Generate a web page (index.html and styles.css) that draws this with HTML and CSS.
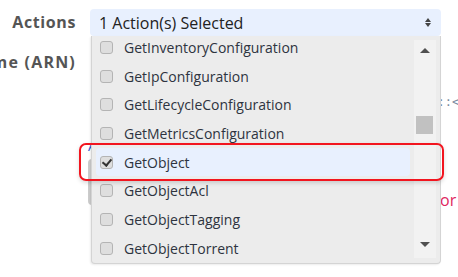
FILE: index.html
```html
<!DOCTYPE html>
<html>
<head>
    <title>Policy Generator</title>
    <meta http-equiv="content-type" content="text/html; charset=UTF-8"/>
    <link rel="stylesheet" href="styles.css">
</head>
<body>
    <div class="pg_form">
        <div class="pg_row">
            <div class="pg_label">Actions</div>
            <div class="pg_field">
                <div class="pg_select">
                    <span>1 Action(s) Selected</span>
                    <i class="pg_caret"></i>
                </div>
            </div>
        </div>
        <div class="pg_row pg_row_arn">
            <div class="pg_label pg_label_wide">Amazon Resource Name (ARN)</div>
            <div class="pg_field pg_arn">
                <p class="pg_hint">arn:aws:s3:::&lt;</p>
                <p class="pg_add">Add Statement</p>
                <div class="pg_box"></div>
                <p class="pg_or">or</p>
            </div>
        </div>

        <!-- dropdown lies over the rows below -->
        <div class="pg_drop">
            <ul class="pg_list">
                <li><i class="chk"></i>GetInventoryConfiguration</li>
                <li><i class="chk"></i>GetIpConfiguration</li>
                <li><i class="chk"></i>GetLifecycleConfiguration</li>
                <li><i class="chk"></i>GetMetricsConfiguration</li>
                <li class="on"><i class="chk"></i>GetObject</li>
                <li><i class="chk"></i>GetObjectAcl</li>
                <li><i class="chk"></i>GetObjectTagging</li>
                <li><i class="chk"></i>GetObjectTorrent</li>
            </ul>
            <div class="pg_scroll">
                <i class="up"></i>
                <div class="thumb"></div>
                <i class="down"></i>
            </div>
        </div>
        <div class="pg_mark"></div>
    </div>
</body>
</html>
```

FILE: styles.css
```css
body{
    margin: 0;
    background: #fff;
    font-family: "Open Sans", "Noto Sans", sans-serif;
    color: #333;
}
.pg_form{
    position: relative;
    width: 458px;
    height: 277px;
    overflow: hidden;
    padding-top: 9px;
    box-sizing: border-box;
}
.pg_row{
    display: flex;
    align-items: flex-start;
}
.pg_label{
    width: 76px;
    flex: none;
    display: flex;
    justify-content: flex-end;
    white-space: nowrap;
    font-size: 16px;
    font-weight: bold;
    color: #555;
    line-height: 27px;
    letter-spacing: 0.6px;
}
.pg_label_wide{
    letter-spacing: 1.2px;
}
.pg_field{
    margin-left: 14px;
    width: 351px;
    flex: none;
}
.pg_select{
    height: 27px;
    background: #e8f0fe;
    border-radius: 4px;
    display: flex;
    align-items: center;
    justify-content: space-between;
    padding: 0 9px;
    box-sizing: border-box;
    font-size: 16px;
    color: #222;
}
.pg_caret{
    width: 7px;
    height: 9px;
    position: relative;
}
.pg_caret:before,
.pg_caret:after{
    content: "";
    position: absolute;
    left: 0;
    border-left: 3.5px solid transparent;
    border-right: 3.5px solid transparent;
}
.pg_caret:before{
    top: 0;
    border-bottom: 4px solid #444;
}
.pg_caret:after{
    bottom: 0;
    border-top: 4px solid #444;
}
.pg_row_arn{
    margin-top: 13px;
}
.pg_arn{
    position: relative;
    height: 200px;
}
.pg_hint{
    margin: 46px 0 0 268px;
    font-family: "DejaVu Sans Mono", monospace;
    font-size: 12px;
    color: #7a8aa0;
    white-space: nowrap;
}
.pg_add{
    margin: 27px 0 0 -2px;
    font-size: 14px;
    color: #3355cc;
}
.pg_box{
    margin: 4px 0 0 -2px;
    width: 120px;
    height: 44px;
    border: 1px solid #ccc;
    border-left: 4px solid #ccc;
    border-radius: 4px;
}
.pg_or{
    margin: -16px 0 0 350px;
    font-size: 16px;
    color: #e0245e;
}
.pg_drop{
    position: absolute;
    left: 91px;
    top: 36px;
    width: 350px;
    height: 228px;
    background: #ececec;
    border: 1px solid #d4d4d4;
    border-top: none;
    border-radius: 0 0 4px 4px;
    box-sizing: border-box;
    box-shadow: -1px 1px 2px rgba(0,0,0,0.08);
    display: flex;
    overflow: hidden;
}
.pg_list{
    list-style: none;
    margin: -3px 0 0;
    padding: 0 4px;
    flex: 1;
}
.pg_list li{
    height: 28.7px;
    display: flex;
    align-items: center;
    padding-left: 4px;
    border-radius: 4px;
    font-size: 14px;
    color: #2e3440;
}
.pg_list li.on{
    background: #e8f0fe;
}
.pg_list .chk{
    width: 11px;
    height: 11px;
    border: 1px solid #b4b4b4;
    background: #dedede;
    border-radius: 3px;
    margin-right: 11px;
    position: relative;
    flex: none;
}
.pg_list .on .chk:after{
    content: "";
    position: absolute;
    left: 3px;
    top: 0px;
    width: 4px;
    height: 7px;
    border: solid #333;
    border-width: 0 2px 2px 0;
    transform: rotate(40deg);
}
.pg_scroll{
    width: 22px;
    margin: 4px 4px 5px 0;
    background: #f2f2f2;
    position: relative;
}
.pg_scroll .up,
.pg_scroll .down{
    position: absolute;
    left: 6px;
    border-left: 5px solid transparent;
    border-right: 5px solid transparent;
}
.pg_scroll .up{
    top: 8px;
    border-bottom: 5px solid #505050;
}
.pg_scroll .down{
    bottom: 11px;
    border-top: 5px solid #505050;
}
.pg_scroll .thumb{
    position: absolute;
    left: 2px;
    top: 76px;
    width: 17px;
    height: 18px;
    background: #c1c1c1;
}
.pg_mark{
    position: absolute;
    left: 79px;
    top: 143px;
    width: 365px;
    height: 38px;
    border: 2px solid #f2151f;
    border-radius: 7px;
    box-sizing: border-box;
    box-shadow: 0 2px 4px rgba(0,0,0,0.15);
}
```
